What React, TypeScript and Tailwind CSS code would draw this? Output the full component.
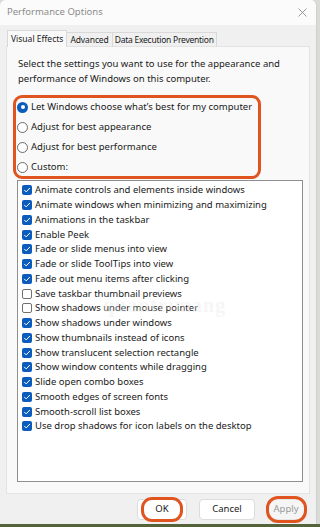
import React from "react";

const effects: [string, boolean][] = [
  ["Animate controls and elements inside windows", true],
  ["Animate windows when minimizing and maximizing", true],
  ["Animations in the taskbar", true],
  ["Enable Peek", true],
  ["Fade or slide menus into view", true],
  ["Fade or slide ToolTips into view", true],
  ["Fade out menu items after clicking", true],
  ["Save taskbar thumbnail previews", false],
  ["Show shadows under mouse pointer", false],
  ["Show shadows under windows", true],
  ["Show thumbnails instead of icons", true],
  ["Show translucent selection rectangle", true],
  ["Show window contents while dragging", true],
  ["Slide open combo boxes", true],
  ["Smooth edges of screen fonts", true],
  ["Smooth-scroll list boxes", true],
  ["Use drop shadows for icon labels on the desktop", true],
];

const radios = [
  "Let Windows choose what\u2019s best for my computer",
  "Adjust for best appearance",
  "Adjust for best performance",
  "Custom:",
];

function Radio({ on }: { on: boolean }) {
  return on ? (
    <span className="w-[11px] h-[11px] rounded-full bg-[#0b5cbd] flex items-center justify-center shrink-0">
      <span className="w-[4px] h-[4px] rounded-full bg-white"></span>
    </span>
  ) : (
    <span className="w-[11px] h-[11px] rounded-full border border-[#6b6b6b] bg-white shrink-0"></span>
  );
}

function Check({ on }: { on: boolean }) {
  return on ? (
    <span className="w-[10px] h-[10px] rounded-[2px] bg-[#0b5cbd] flex items-center justify-center shrink-0">
      <svg width="8" height="8" viewBox="0 0 8 8" fill="none">
        <path d="M1.5 4.2l1.7 1.7L6.6 2.3" stroke="white" strokeWidth="1" strokeLinecap="round" strokeLinejoin="round" />
      </svg>
    </span>
  ) : (
    <span className="w-[10px] h-[10px] rounded-[2px] border border-[#707070] bg-white shrink-0"></span>
  );
}

export default function App() {
  return (
    <div className="w-[320px] h-[527px] bg-[#d9dcd6] relative overflow-hidden" style={{ fontFamily: '"Noto Sans", "Open Sans", sans-serif' }}>
      <div className="w-[317px] h-[524px] bg-[#f0f0f0] rounded-t-[6px] border-r border-[#cfcfcf] flex flex-col overflow-hidden relative">
        {/* Title bar */}
        <div className="h-[25px] bg-[#fbfbfb] flex items-center justify-between pl-[7px] pr-[7px] shrink-0">
          <span className="text-[9.5px] text-[#8c8c8c]">Performance Options</span>
          <svg width="9" height="9" viewBox="0 0 9 9" className="mr-[2px]">
            <path d="M0.5 0.5l8 8M8.5 0.5l-8 8" stroke="#8c8c8c" strokeWidth="0.9" />
          </svg>
        </div>

        {/* Tabs */}
        <div className="flex items-end pl-[7px] h-[22px] shrink-0 -mb-px relative z-10">
          <div className="h-[17px] px-[3px] bg-[#f9f9f9] border border-b-0 border-[#d9d9d9] text-[8.5px] text-[#1a1a1a] flex items-center">
            Visual Effects
          </div>
          <div className="h-[15px] px-[3px] border-t border-r border-[#d9d9d9] text-[8.5px] text-[#1a1a1a] flex items-center tracking-[-0.1px]">
            Advanced
          </div>
          <div className="h-[15px] px-[2px] border-t border-r border-[#d9d9d9] text-[8.5px] text-[#1a1a1a] flex items-center tracking-[-0.25px]">
            Data Execution Prevention
          </div>
        </div>

        {/* Panel */}
        <div className="mx-[6px] h-[448px] bg-[#f9f9f9] border border-[#e3e3e3] pl-[11px] pr-[7px] pt-[9px] shrink-0">
          <p className="text-[9.5px] leading-[15px] text-[#1a1a1a]">
            Select the settings you want to use for the appearance and
            <br />
            performance of Windows on this computer.
          </p>

          <div className="mt-[9px] -ml-[5px] w-[248px] h-[84px] border-[3px] border-[#e0541f] rounded-[9px] flex flex-col justify-center pl-[1px]">
            {radios.map((r, i) => (
              <div key={r} className="h-[20px] shrink-0 flex items-center gap-[3px] text-[9.5px] text-[#1a1a1a]">
                <Radio on={i === 0} />
                <span>{r}</span>
              </div>
            ))}
          </div>

          <div className="mt-[1px] -ml-[1px] w-[286px] h-[302px] bg-white border border-[#8f8f8f] pt-[2px] pl-[4px]">
            {effects.map(([label, on]) => (
              <div key={label} className="h-[14.75px] flex items-center gap-[3px] text-[9.5px] text-[#1a1a1a]">
                <Check on={on} />
                <span>{label}</span>
              </div>
            ))}
          </div>
        </div>

        {/* Buttons */}
        <div className="flex items-center justify-end gap-[12px] pr-[11px] pt-[5px]">
          <button className="w-[50px] h-[21px] bg-white border border-[#dcdcdc] rounded-[4px] text-[9.5px] text-[#1a1a1a]">OK</button>
          <button className="w-[56px] h-[21px] bg-white border border-[#dcdcdc] rounded-[4px] text-[9.5px] text-[#1a1a1a]">Cancel</button>
          <button className="w-[38px] h-[21px] bg-[#f5f5f5] border border-[#e6e6e6] rounded-[4px] text-[9.5px] text-[#9a9a9a]">Apply</button>
        </div>

        {/* Watermark */}
        <span className="absolute left-[103px] top-[290px] text-[20px] font-bold text-[#e8e8e8]/40 tracking-[1px] pointer-events-none" style={{ fontFamily: '"Liberation Serif", serif' }}>
          quantrimang
        </span>

        {/* Annotation highlights */}
        <div className="absolute left-[141px] top-[497px] w-[42px] h-[25px] border-[3px] border-[#e0541f] rounded-[11px]"></div>
        <div className="absolute left-[266px] top-[496px] w-[41px] h-[27px] border-[3px] border-[#e0541f] rounded-[12px]"></div>
      </div>
      <div className="absolute left-0 bottom-0 w-[320px] h-[3px] bg-[#55633a]"></div>
    </div>
  );
}
